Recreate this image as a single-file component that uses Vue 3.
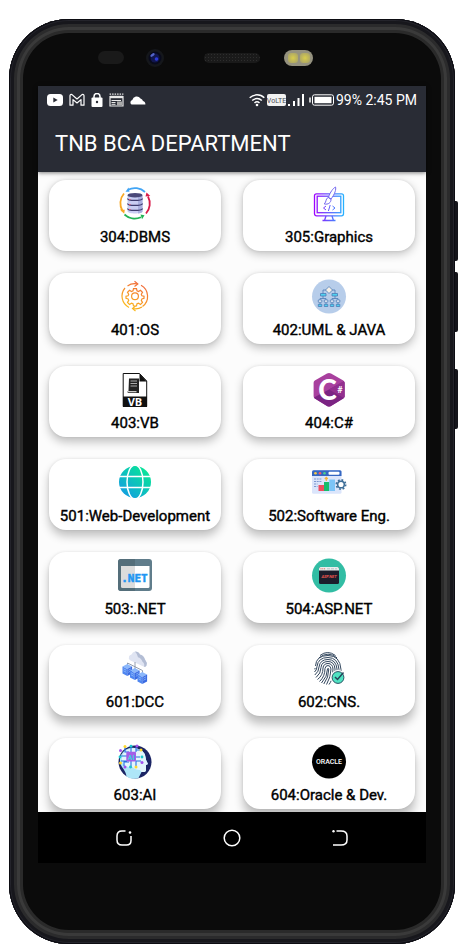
<template>
    <div class="stage">
        <div class="phone">
            <span class="side-key side-key--up"></span>
            <span class="side-key side-key--down"></span>
            <span class="side-key side-key--power"></span>

            <div class="sensors">
                <div class="sensors__left">
                    <span class="proximity"></span>
                    <svg class="camera" viewBox="0 0 18 18">
                        <circle cx="9" cy="9" r="9" fill="#15171b" />
                        <circle cx="9" cy="9" r="6.5" fill="#080a1c" />
                        <circle cx="9" cy="9" r="4.5" fill="#11164f" />
                        <ellipse cx="6.5" cy="6" rx="2.5" ry="1.3" fill="#5364c8" transform="rotate(-35 6.5 6)" />
                        <circle cx="10.5" cy="10" r="1.8" fill="#2d3bd8" />
                    </svg>
                </div>
                <span class="speaker"></span>
                <div class="sensors__right">
                    <span class="flash"><i></i><i></i></span>
                </div>
            </div>

            <div class="screen">
                <header class="header">
                    <div class="status">
                        <div class="status__apps">
                            <svg width="16" height="14" viewBox="0 0 16 14">
                                <rect y="1" width="16" height="12" rx="3.5" fill="#fff" />
                                <path d="M6.3 4.5v5l4.4-2.5z" fill="#292c35" />
                            </svg>
                            <svg width="16" height="14" viewBox="0 0 16 14" fill="none" stroke="#fff" stroke-width="1.2" stroke-linejoin="round">
                                <path d="M1 12.2V2.6Q1.4 1 3 1.6L8 6l5-4.4q1.6-.6 2 1v9.6h-3V6.6L8 10 4 6.6v5.6z" />
                            </svg>
                            <svg width="12" height="14" viewBox="0 0 12 14">
                                <path d="M3 6V3.5a3 3 0 0 1 6 0V6" fill="none" stroke="#fff" stroke-width="1.5" />
                                <rect x=".5" y="4.5" width="11" height="9.5" rx="1" fill="#fff" />
                                <circle cx="6" cy="9" r="1.2" fill="#292c35" />
                            </svg>
                            <svg width="15" height="14" viewBox="0 0 15 14" fill="none" stroke="#e8e8e8">
                                <path d="M.6 1.2h13.8" stroke-width="1.2" stroke-dasharray="1.5 1" />
                                <path d="M1 3.6h13v9.4H1z" stroke-width="1.2" />
                                <path d="M1 4h13" stroke-width="2.4" />
                                <path d="M2.500 7.500h9.500M2.500 9.500h4M2.500 11.300h4" />
                                <path d="M8 8.500h5v4H8z" fill="#aaa" stroke="none" />
                            </svg>
                            <svg width="16" height="14" viewBox="0 0 16 14">
                                <path d="M1.5 11.5a2.5 2.5 0 0 1 .8-4.500 4.500 4.500 0 0 1 8.200-1.500A3.600 3.600 0 0 1 13 8q2.500.5 2.400 3.500z" fill="#fff" />
                            </svg>
                        </div>
                        <div class="status__system">
                            <svg width="16" height="14" viewBox="0 0 16 14" fill="none" stroke="#fff" stroke-width="1.5">
                                <path d="M.7 4.800a10.500 10.500 0 0 1 14.600 0M3.200 7.500a7 7 0 0 1 9.600 0M5.500 10a3.600 3.600 0 0 1 5 0" />
                                <circle cx="8" cy="12" r="1.3" fill="#fff" stroke="none" />
                            </svg>
                            <svg width="19" height="14" viewBox="0 0 19 14">
                                <rect y="1" width="19" height="12" rx="2" fill="#f2f2f2" />
                                <text x="9.5" y="10" text-anchor="middle" class="label label--volte">VoLTE</text>
                            </svg>
                            <svg class="signal" width="16" height="14" viewBox="0 0 16 14" stroke="#fff" stroke-width="2">
                                <path d="M1 13v-2M6 13V8M10.500 13V5M15 13V1" />
                            </svg>
                            <svg class="battery" width="25" height="14" viewBox="0 0 25 14" fill="none">
                                <path d="M1 4.5v5" stroke="#fff" stroke-width="1.5" />
                                <rect x="3.5" y="1.800" width="21" height="10.400" rx="2" stroke="#fff" />
                                <rect x="5.500" y="3.800" width="17" height="6.400" fill="#fff" />
                            </svg>
                            <span>99% 2:45 PM</span>
                        </div>
                    </div>
                    <h1 class="title">TNB BCA DEPARTMENT</h1>
                </header>

                <main class="subjects">
                    <button
                        v-for="(item, index) in subjects"
                        :key="item.code"
                        class="card"
                        type="button"
                        :style="{ '--drop': dropOf(index) }"
                    >
                        <svg class="card__icon" viewBox="0 0 34 34" fill="none">
                            <!-- 数据库 -->
                            <g v-if="item.icon === 'database'">
                                <g stroke-width="1.8">
                                    <path d="M27 5A15 15 0 0 0 10 2.700" stroke="#42a5f5" />
                                    <path d="M6 6.500A15 15 0 0 0 4.500 24" stroke="#f9a825" />
                                    <path d="M6.500 27.500A15 15 0 0 0 23 30.200" stroke="#22b455" />
                                    <path d="M28 26.500A15 15 0 0 0 30 9.500" stroke="#d81b4a" />
                                </g>
                                <path d="M7.500 4.800 10.500.5l1 4.300z" fill="#42a5f5" />
                                <path d="m1.800 22.500 5 .2-.6 4z" fill="#f9a825" />
                                <path d="m22.500 27.500 4 .8-2.500 4z" fill="#22b455" />
                                <path d="m27.500 9.500 1-4 3.800 3.500z" fill="#d81b4a" />
                                <path d="M9.500 8v16.200c0 3 15 3 15 0V8z" fill="#c9cdf2" />
                                <path d="M20 9h4.500v15.500c0 1-2 1.700-4.500 2z" fill="#a9afdf" />
                                <g stroke="#3f3d70" stroke-width="1.2">
                                    <path d="M9.500 11.500c0 2.600 15 2.600 15 0M9.500 16.500c0 2.600 15 2.600 15 0M9.500 21.500c0 2.600 15 2.600 15 0" />
                                </g>
                                <ellipse cx="17" cy="8.200" rx="7.500" ry="2.300" fill="#4a4878" />
                                <path d="M11 12.500h1.500M11 17.500h1.500M11 22.500h1.500" stroke="#f0506e" />
                            </g>

                            <!-- 画图 -->
                            <g v-else-if="item.icon === 'graphics'" stroke="url(#violet)">
                                <rect x="2.500" y="6.800" width="29" height="22" rx="2" stroke-width="1.300" />
                                <rect x="5.200" y="9.200" width="23.600" height="16.500" stroke-width="1.300" />
                                <path d="M14 29l-1.500 4.500M20 29l1.500 4.500M10.500 33.500h13" stroke-width="1.300" />
                                <path d="m14 19-2.500 2 2.500 2M20.500 19l2.500 2-2.500 2M18.200 18l-1.800 6" />
                                <path d="M16.500 10.500C18 5 21.500 1 23.500 0c.8 2-.5 7-4.500 12zM16.300 10.500c-3 1-1.500 4-4 6.500 4 .8 7-1.500 6.700-5z" fill="#fff" stroke="#7468ef" />
                            </g>

                            <!-- 齿轮循环 -->
                            <g v-else-if="item.icon === 'cycle'" stroke="url(#sunset)" stroke-width="1.2">
                                <path d="M9.500 6A12.700 12.700 0 0 1 19 3.900M23 5.200A12.700 12.700 0 0 1 24.500 26.500M7 8A12.700 12.700 0 0 0 11 27.500M24 27A12.700 12.700 0 0 1 15 28.500" />
                                <path d="m16.500 1.200 3.300 2.700-3.300 2.500M17.500 26l-3 2.500 3 2.500" />
                                <circle cx="17" cy="16.300" r="3.400" />
                                <path d="m15.500 8.700 3 0 .5 2.200 1.500.6 2-1.200 2 2-1.200 2 .6 1.500 2.100.4v2.200l-2.100.5-.6 1.500 1.200 2-2 2-2-1.200-1.500.6-.5 2.200h-3l-.5-2.200-1.500-.6-2 1.200-2-2 1.200-2-.6-1.500-2.100-.5v-2.200l2.100-.4.6-1.500-1.200-2 2-2 2 1.200 1.500-.6z" />
                            </g>

                            <!-- 类图 -->
                            <g v-else-if="item.icon === 'uml'">
                                <circle cx="17" cy="16.500" r="17" fill="#b7cdea" />
                                <g stroke="#4c7bb5" stroke-width=".8">
                                    <path d="M14 10h-3v4M20 10h3v4M11 16v2.500M23 16v2.500M8 21v-2.500h6V21M20 21v-2.500h6V21M8 21v4M14 21v4M20 21v4M26 21v4" />
                                    <path d="m17 6.500 3.500 3.500-3.500 3.500-3.500-3.500z" fill="#f5efe6" />
                                    <path d="M8.500 13.500h5.500v2.500H8.500zM20 13.500h5.500v2.500H20z" fill="#4fd2f0" />
                                    <path d="M6.300 20h3.500v2.200H6.300zM12.300 20h3.500v2.200h-3.500zM18.300 20h3.500v2.200h-3.500zM24.300 20h3.500v2.200h-3.500z" fill="#fff" />
                                    <path d="M6.300 24.300h3.500v2.200H6.300zM12.300 24.300h3.500v2.200h-3.500zM18.300 24.300h3.500v2.200h-3.500zM24.300 24.300h3.500v2.200h-3.500z" fill="#4fd2f0" />
                                </g>
                            </g>

                            <!-- VB 文件 -->
                            <g v-else-if="item.icon === 'vb'">
                                <path d="M5.200.5h16.300L28.700 8v25.500H5.200z" fill="#fff" stroke="#111" />
                                <path d="M21.500.5 28.800 8.500h-7.300z" fill="#111" />
                                <path d="M5 23.500h24V34H5z" fill="#111" />
                                <path d="M11 5.500h10V20H10q-1.500-1.200.5-2.200z" fill="#222" />
                                <path d="M12.500 8h6.500M12.500 10.500h6.500M12.500 13h6.500" stroke="#aaa" />
                                <path d="M10 18h8.500v1.300H10z" fill="#ccc" />
                                <text x="17" y="32.500" text-anchor="middle" class="label label--vb">VB</text>
                            </g>

                            <!-- C# -->
                            <g v-else-if="item.icon === 'csharp'">
                                <path d="M17 0q1 0 2 .6l12.300 7q1.200.8 1.200 2.200v13.500q0 1.300-1.200 2.100L19 33q-2 1-4 0L2.800 25.500q-1.200-.8-1.200-2.200V9.800q0-1.400 1.200-2.200L15 .6q1-.6 2-.6z" fill="#a8409e" />
                                <path d="M2 24.500 32 8.500q.5.800.5 1.500v13.300q0 1.300-1.200 2.100L19 33q-2 1-4 0L2.800 25.500z" fill="#7b2483" />
                                <path d="m17 16.500 14.500-8.200q1 .7 1 1.500v13.500q0 1-.8 1.700z" fill="#93308f" />
                                <text x="15.500" y="26.500" text-anchor="middle" class="label label--c">C</text>
                                <text x="28" y="19.500" text-anchor="middle" class="label label--sharp">#</text>
                            </g>

                            <!-- 地球 -->
                            <g v-else-if="item.icon === 'globe'">
                                <circle cx="17" cy="16" r="16" fill="url(#ocean)" />
                                <g stroke="#fff" stroke-width="1.5">
                                    <path d="M0 10.500h34M0 21.500h34" />
                                    <ellipse cx="17" cy="16" rx="8" ry="17" />
                                </g>
                            </g>

                            <!-- 软件工程 -->
                            <g v-else-if="item.icon === 'software'">
                                <rect y="4.300" width="29.500" height="23.500" rx="1.500" fill="#dbe5fb" />
                                <path d="M0 10V5.800q0-1.500 1.500-1.500H28q1.500 0 1.500 1.500V10z" fill="#3567c2" />
                                <circle cx="3.500" cy="7.200" r="1.300" fill="#f6c945" />
                                <circle cx="8" cy="7.200" r="1.300" fill="#ef5b70" />
                                <circle cx="12.500" cy="7.200" r="1.300" fill="#4fd08c" />
                                <rect x="16.500" y="5.700" width="11" height="3" rx="1" fill="#fff" />
                                <path d="M2 13h7.500M2 15.500h7.500M2 18h3.500M2 20.500h3.500" stroke="#7d97cf" stroke-dasharray="2 .7" />
                                <path d="M14.300 15v-3.500M12.800 13l1.500-1.700 1.500 1.700" stroke="#f4b53f" stroke-width="1.2" />
                                <path d="M6.500 19H12v6H6.500z" fill="#ef4c5e" />
                                <path d="M12 16h5.300v9H12z" fill="#16bd6c" />
                                <path d="M17.300 13.500H23V25h-5.700z" fill="#7cc4f7" />
                                <circle cx="29" cy="18.500" r="4.600" stroke="#3e6e98" stroke-width="1.800" stroke-dasharray="1.800 1.800" />
                                <circle cx="29" cy="18.500" r="3.300" fill="#fff" stroke="#3e6e98" stroke-width="1.500" />
                            </g>

                            <!-- .NET 窗口 -->
                            <g v-else-if="item.icon === 'dotnet'">
                                <rect width="34" height="32" rx="3" fill="#607d8b" />
                                <path d="M17 0H3Q0 0 0 3v26q0 3 3 3h14z" fill="#546e7a" />
                                <path d="M3 7h14v22H4.500Q3 29 3 27.500z" fill="#dcdcdc" />
                                <path d="M17 7h14.500v20.500q0 1.500-1.500 1.500H17z" fill="#fff" />
                                <text x="16.500" y="22.500" text-anchor="middle" class="label label--net">.NET</text>
                            </g>

                            <!-- ASP.NET -->
                            <g v-else-if="item.icon === 'aspnet'">
                                <circle cx="17" cy="16.500" r="17" fill="#32bda4" />
                                <rect x="7" y="8" width="20" height="17" rx="1.500" fill="#1b1e2c" />
                                <path d="M7 11.500v-2Q7 8 8.500 8h17Q27 8 27 9.500v2z" fill="#e7eeee" />
                                <path d="M8.500 9.800h5" stroke="#e06456" stroke-dasharray="1 .8" />
                                <path d="M15 9.800h10" stroke="#b8c4c6" stroke-dasharray="3 1" />
                                <text x="17" y="19.200" text-anchor="middle" class="label label--asp">ASP.NET</text>
                            </g>

                            <!-- 云计算 -->
                            <g v-else-if="item.icon === 'cloud'">
                                <path d="M17-.5q3.500 0 4.500 3.500 4 0 5.500 4.500 2.500 3 1.500 6-.7 2-3 1L12.500 8.500q-2.500-2-1.500-4 .5-1.500 2.500-2 1-2.500 3.500-3z" fill="#dfe4f2" />
                                <path d="M17-.5q4 0 5 3 3.500.5 5 5 2.500 3 1.500 6-.7 1.800-2.500 1.200 1-3-1.500-5-1.500-4-4.500-4.500Q19 1.500 17-.5z" fill="#b3bdd4" />
                                <path d="M9.500 16v-5l15 7.500V23M17 10v10" stroke="#8894a8" stroke-width=".9" />
                                <g v-for="(cube, n) in cubes" :key="n" :transform="cube">
                                    <path d="m0 2.500 4.800-2.500 4.800 2.500L4.800 5z" fill="#8cb8fb" />
                                    <path d="M0 2.500 4.800 5v7L0 9.500z" fill="#4f86f0" />
                                    <path d="M9.600 2.500 4.800 5v7l4.800-2.500z" fill="#3a6be2" />
                                    <path d="m1 4.800 2.800 1.500M1 6.800l2.800 1.500M5.800 6.300l2.800-1.500M5.800 8.300l2.800-1.500" stroke="#9cc4ff" stroke-width=".7" />
                                </g>
                            </g>

                            <!-- 指纹 -->
                            <g v-else-if="item.icon === 'fingerprint'">
                                <g stroke="#33475e" stroke-width="1">
                                    <path d="M8 3.500Q15.500-2.500 23.500 3.500M7 5.800Q16-1.500 25 5.800" />
                                    <path d="M3.500 14Q4 3.500 16 3.500T29 17.500v2" />
                                    <path d="M2.500 20Q5 18 5 14.500 6 5.500 16 5.500t11 12v2" />
                                    <path d="M2.800 23Q7 19.500 7 15 8 7.500 16 7.500t9 9.500v3" />
                                    <path d="M4 25.500Q9 21.500 9 15.500q.5-6 7-6t7 7.500v4" />
                                    <path d="M5.500 27.500Q11 23.500 11 16q.5-4.500 5-4.500t5 5.500q0 5-1.500 9" />
                                    <path d="M7.500 29.500Q13 24.500 13 16.500q.5-3 3-3t3 3.500q0 8-4.500 15.500" />
                                    <path d="M9.500 31Q15.500 24.500 15.500 17q.5-1.500 1.300 0 0 8.500-5 15M17 32.500q1.500-2 2.300-4M3 16v1.500" />
                                </g>
                                <circle cx="26" cy="25.500" r="7.500" fill="#fff" />
                                <circle cx="26" cy="25.500" r="5.900" fill="#50e3c2" stroke="#2b5264" />
                                <path d="m23 25 2.500 2.500 6-7" stroke="#25455a" stroke-width="1.500" />
                            </g>

                            <!-- 人工智能 -->
                            <g v-else-if="item.icon === 'ai'">
                                <circle cx="17" cy="17" r="16.500" fill="#1b2464" />
                                <path d="M3 10Q8 1.500 17 3q9.500 1.500 10.500 9 0 3 2.500 7l-2 1v5q0 2.500-4.500 2l-3 6q-7 2-12-1.500Q8 27 4 22 .5 16 3 10z" fill="#aee6f8" />
                                <path d="M17 3q9.500 1.500 10.500 9 0 3 2.500 7l-2 1v5q0 2.500-4.500 2l-1.500-2q-5 0-7.500-3-9 1-10.500-6Q3 4 17 3z" fill="#e3f5fc" />
                                <g stroke="#276fe0" stroke-width="1.1">
                                    <path d="M7 2v5h4M13 1v7M18 2v5M22 5h-4M3 11h6M3 16h6M6 21v-4h5M13 16v7M18 16v6M22 12h-5M23 16h-5" />
                                </g>
                                <rect x="8.300" y="6.800" width="9.700" height="9.700" rx="1" fill="#a45ee8" />
                                <g fill="#ffda2e">
                                    <circle cx="7" cy="1.500" r="1.500" /><circle cx="2.500" cy="18" r="1.500" /><circle cx="23" cy="5" r="1.500" /><circle cx="18" cy="22" r="1.500" />
                                </g>
                                <g fill="#1bc7cf">
                                    <circle cx="13" cy="1.200" r="1.400" /><circle cx="2" cy="12" r="1.400" /><circle cx="24" cy="12" r="1.400" /><circle cx="12.500" cy="22" r="1.400" />
                                </g>
                                <g fill="#a252ec">
                                    <circle cx="19" cy="1" r="1.500" /><circle cx="2.500" cy="5.500" r="1.500" /><circle cx="24" cy="17.500" r="1.500" /><circle cx="7" cy="22" r="1.500" />
                                </g>
                                <text x="13.200" y="14.500" text-anchor="middle" class="label label--ai">AI</text>
                            </g>

                            <!-- Oracle -->
                            <g v-else>
                                <circle cx="17" cy="16.500" r="17" fill="#000" />
                                <text x="17" y="19" text-anchor="middle" class="label label--oracle">ORACLE</text>
                            </g>
                        </svg>
                        <span class="card__name">{{ item.code }}:{{ item.name }}</span>
                    </button>
                </main>

                <nav class="keys">
                    <button type="button" aria-label="Recent apps">
                        <svg width="18" height="18" viewBox="0 0 18 18" fill="none" stroke="#fff" stroke-width="1.5">
                            <path d="M10.500 2H7Q2 2 2 7v4q0 5 5 5h4.500q4.500 0 4.500-4.500V7" />
                            <circle cx="15" cy="3.500" r="1.300" fill="#fff" stroke="none" />
                        </svg>
                    </button>
                    <button type="button" aria-label="Home">
                        <svg width="18" height="18" viewBox="0 0 18 18" fill="none" stroke="#fff" stroke-width="1.5">
                            <circle cx="9" cy="9" r="7.800" />
                        </svg>
                    </button>
                    <button type="button" aria-label="Back">
                        <svg width="18" height="18" viewBox="0 0 18 18" fill="none" stroke="#fff" stroke-width="1.5">
                            <path d="M5.500 2H10q6 0 6 5v4q0 5-6 5H2" />
                            <circle cx="2.500" cy="2.300" r="1.200" fill="#fff" stroke="none" />
                        </svg>
                    </button>
                </nav>
            </div>
        </div>

        <!-- 图标共用的渐变 -->
        <svg class="defs" aria-hidden="true">
            <defs>
                <linearGradient id="violet" gradientUnits="userSpaceOnUse" x1="2" y1="0" x2="32" y2="0">
                    <stop offset="0" stop-color="#a000ff" />
                    <stop offset="1" stop-color="#25b4ff" />
                </linearGradient>
                <linearGradient id="sunset" gradientUnits="userSpaceOnUse" x1="8" y1="30" x2="24" y2="3">
                    <stop offset="0" stop-color="#fcc419" />
                    <stop offset="1" stop-color="#f0653a" />
                </linearGradient>
                <linearGradient id="ocean" gradientUnits="userSpaceOnUse" x1="5" y1="28" x2="27" y2="4">
                    <stop offset="0" stop-color="#129fe0" />
                    <stop offset="1" stop-color="#08e39a" />
                </linearGradient>
            </defs>
        </svg>
    </div>
</template>

<script setup>
const subjects = [
    { code: 304, name: 'DBMS', icon: 'database' },
    { code: 305, name: 'Graphics', icon: 'graphics' },
    { code: 401, name: 'OS', icon: 'cycle' },
    { code: 402, name: 'UML & JAVA', icon: 'uml' },
    { code: 403, name: 'VB', icon: 'vb' },
    { code: 404, name: 'C#', icon: 'csharp' },
    { code: 501, name: 'Web-Development', icon: 'globe' },
    { code: 502, name: 'Software Eng.', icon: 'software' },
    { code: 503, name: '.NET', icon: 'dotnet' },
    { code: 504, name: 'ASP.NET', icon: 'aspnet' },
    { code: 601, name: 'DCC', icon: 'cloud' },
    { code: 602, name: 'CNS.', icon: 'fingerprint' },
    { code: 603, name: 'AI', icon: 'ai' },
    { code: 604, name: 'Oracle & Dev.', icon: 'oracle' },
];

const cubes = ['translate(4.5 12)', 'translate(12 16)', 'translate(19.5 20)'];

// 光源在屏幕顶部，越往下阴影越长
function dropOf(index) {
    return `${3 + Math.floor(index / 2)}px`;
}
</script>

<style>
body {
    margin: 0;
    background: #fff;
}
</style>

<style scoped>
.stage {
    padding: 19px 9px 6px;
    font-family: Roboto, 'Liberation Sans', sans-serif;
}
.phone {
    position: relative;
    padding: 14px 29px 81px;
    border-radius: 60px;
    background: #0b0b0b;
    box-shadow:
        inset 0 0 0 1px #0c0c12,
        inset 0 0 0 2px #24242b,
        inset 0 0 0 5px #17171c,
        inset 0 0 0 8px #2b2b2c,
        inset 0 0 0 11px #3a3a3a,
        inset 0 0 0 14px #2a2a2a;
}
.side-key {
    position: absolute;
    right: -3px;
    width: 3px;
    height: 60px;
    border-radius: 0 2px 2px 0;
    background: #15151b;
}
.side-key--up {
    top: 182px;
}
.side-key--down {
    top: 253px;
}
.side-key--power {
    top: 350px;
}

.sensors {
    display: grid;
    grid-template-columns: 1fr 56px 1fr;
    align-items: center;
    height: 53px;
    padding-bottom: 4px;
    box-sizing: border-box;
}
.sensors__left {
    display: flex;
    align-items: center;
    justify-content: flex-end;
    gap: 22px;
    padding-right: 40px;
}
.sensors__right {
    padding-left: 24px;
}
.proximity {
    width: 26px;
    height: 13px;
    border-radius: 7px;
    background: #1a1a1a;
}
.camera {
    width: 18px;
    height: 18px;
}
.speaker {
    height: 10px;
    border-radius: 5px;
    background: radial-gradient(#2e2e2e 1px, #1a1a1a 1px) 0 0 / 3px 3px;
}
.flash {
    display: flex;
    justify-content: center;
    align-items: center;
    gap: 2px;
    width: 29px;
    height: 16px;
    border-radius: 8px;
    background: #95927f;
}
.flash i {
    width: 10px;
    height: 10px;
    border-radius: 3px;
    background: radial-gradient(#d8cd4c, #a39d6c);
}

.screen {
    background: #fcfcfc;
}
.header {
    position: relative;
    height: 86px;
    background: #292c35;
    color: #fff;
    box-shadow: 0 1px 4px rgba(0, 0, 0, 0.5);
}
.status {
    display: flex;
    justify-content: space-between;
    align-items: center;
    height: 28px;
    padding: 0 9px;
    font-size: 14px;
    line-height: 28px;
    white-space: nowrap;
}
.status__apps,
.status__system {
    display: flex;
    align-items: center;
}
.status__apps {
    gap: 6px;
}
.status__system {
    gap: 2px;
}
.battery {
    margin-left: 3px;
}
.title {
    margin: 0;
    padding-left: 17px;
    font-size: 22px;
    font-weight: 400;
    line-height: 60px;
}

.subjects {
    display: grid;
    grid-template-columns: 1fr 1fr;
    gap: 22px;
    padding: 8px 11px 3px;
    overflow: hidden;
}
.card {
    display: flex;
    flex-direction: column;
    align-items: center;
    gap: 6px;
    height: 71px;
    padding: 7px 0 4px;
    border: 0;
    border-radius: 17px;
    background: #fff;
    box-shadow:
        0 var(--drop) 10px rgba(0, 0, 0, 0.24),
        0 0 3px rgba(0, 0, 0, 0.1);
    color: #000;
    font: 400 15px/20px Roboto, 'Liberation Sans', sans-serif;
    cursor: pointer;
}
.card__icon {
    width: 34px;
    height: 34px;
    overflow: visible;
}
.card__name {
    white-space: nowrap;
    -webkit-text-stroke: 0.4px #000;
}

.label {
    font-family: Roboto, 'Liberation Sans', sans-serif;
    font-weight: 700;
}
.label--volte {
    fill: #4a4c52;
    font-size: 7px;
    font-weight: 400;
}
.label--vb {
    fill: #fff;
    font-family: 'Open Sans', sans-serif;
    font-size: 11px;
}
.label--c {
    fill: #fff;
    font-family: Lato, sans-serif;
    font-size: 28px;
    font-weight: 900;
}
.label--sharp {
    fill: #fff;
    font-size: 9px;
}
.label--net {
    fill: #2196f3;
    stroke: #2196f3;
    stroke-width: 0.5px;
    font-family: 'DejaVu Sans Mono', monospace;
    font-size: 11px;
}
.label--asp {
    fill: #f0574f;
    font-size: 4px;
    font-style: italic;
}
.label--ai {
    fill: #36d3dc;
    font-size: 7px;
}
.label--oracle {
    fill: #fff;
    font-size: 7px;
    font-weight: 500;
}

.keys {
    position: relative;
    display: flex;
    justify-content: center;
    align-items: center;
    gap: 90px;
    height: 51px;
    background: #000;
}
.keys button {
    display: flex;
    padding: 0;
    border: 0;
    background: none;
    cursor: pointer;
}
.defs {
    position: absolute;
    width: 0;
    height: 0;
}
</style>
